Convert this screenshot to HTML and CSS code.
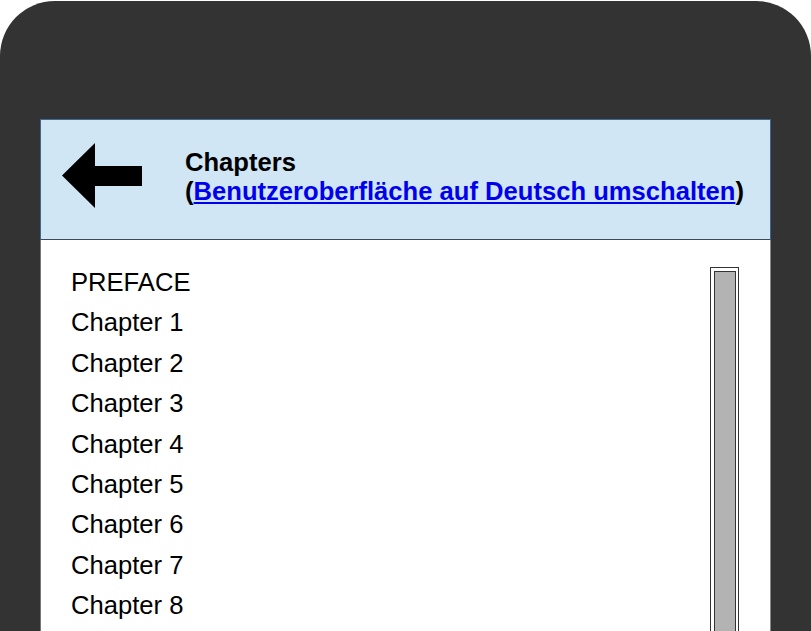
FILE: index.html
```html
<!DOCTYPE html>
<html>
<head>
<meta charset="utf-8">
<link rel="stylesheet" href="styles.css">
</head>
<body>
<div class="phone">
  <div class="screen">
    <div class="header">
      <svg class="back" width="80" height="65" viewBox="0 0 80 65">
        <polygon points="0,32.5 33,0 33,23 80,23 80,43 33,43 33,65" fill="#000"/>
      </svg>
      <div class="title">
        <div>Chapters</div>
        <div>(<a href="#">Benutzeroberfläche auf Deutsch umschalten</a>)</div>
      </div>
    </div>
    <div class="content">
      <ul class="list">
        <li>PREFACE</li>
        <li>Chapter 1</li>
        <li>Chapter 2</li>
        <li>Chapter 3</li>
        <li>Chapter 4</li>
        <li>Chapter 5</li>
        <li>Chapter 6</li>
        <li>Chapter 7</li>
        <li>Chapter 8</li>
      </ul>
      <div class="scrollbar"><div class="thumb"></div></div>
    </div>
  </div>
</div>
</body>
</html>
```
FILE: styles.css
```css
html, body {
  margin: 0;
  padding: 0;
  background: #fff;
  overflow: hidden;
}
body {
  width: 811px;
  height: 631px;
  font-family: "Liberation Sans", Arial, sans-serif;
}
.phone {
  margin-top: 1px;
  height: 630px;
  background: #333;
  border-radius: 55px 55px 0 0;
  padding: 118px 40px 0 40px;
  box-sizing: border-box;
}
.screen {
  width: 731px;
  background: #fff;
  height: 512px;
}
.header {
  height: 118px;
  background: #d0e6f4;
  border: 1px solid #3d6893;
  border-bottom-color: #3a4a5a;
  display: flex;
  align-items: center;
  padding-left: 21px;
  padding-top: 1px;
  box-sizing: content-box;
}
.back {
  display: block;
  flex: none;
  margin-top: -10px;
}
.title {
  margin-left: 43px;
  font-size: 25.6px;
  font-weight: bold;
  color: #000;
  line-height: 29px;
  margin-top: -7px;
}
.title a {
  color: #0000ee;
  text-decoration: underline;
}
.content {
  display: flex;
  justify-content: space-between;
  border-left: 1px solid #777;
  border-right: 1px solid #888;
  height: 392px;
}
.list {
  list-style: none;
  margin: 0;
  padding: 22px 0 0 30px;
  font-size: 25.6px;
  line-height: 40.4px;
  color: #000;
}
.scrollbar {
  margin-top: 27px;
  margin-right: 31px;
  width: 29px;
  height: 370px;
  border: 1px solid #333;
  box-sizing: border-box;
  padding: 3px 2px 0 3px;
}
.thumb {
  height: 100%;
  background: #b3b3b3;
  border: 1px solid #333;
  box-sizing: border-box;
}
```
